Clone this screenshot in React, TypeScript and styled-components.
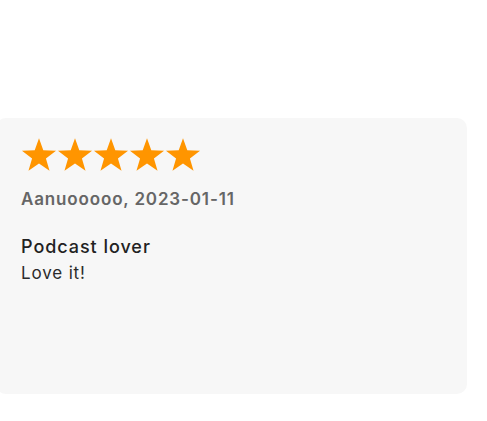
import React from "react";
import styled, { createGlobalStyle } from "styled-components";

const Global = createGlobalStyle`
  html, body { margin: 0; padding: 0; background: #ffffff; }
  body { font-family: Inter, "Noto Sans", sans-serif; -webkit-font-smoothing: antialiased; }
`;

const Page = styled.div`
  padding-top: 118px;
  padding-right: 20px;
  margin-left: -4px;
`;

const Card = styled.article`
  background: #f7f7f7;
  border-radius: 10px;
  height: 276px;
  box-sizing: border-box;
  padding: 19px 25px 0 25px;
  display: flex;
  flex-direction: column;
`;

const Stars = styled.div`
  display: flex;
  height: 36px;
`;

const StarBox = styled.svg`
  width: 36px;
  height: 36px;
  display: block;
`;

const Author = styled.div`
  margin-top: 15px;
  font-size: 17px;
  font-weight: 600;
  color: #666666;
  line-height: 22px;
  letter-spacing: 0.85px;
`;

const Title = styled.div`
  margin-top: 24px;
  font-size: 18px;
  font-weight: 500;
  color: #222222;
  line-height: 26px;
  letter-spacing: 0.95px;
`;

const Body = styled.div`
  font-size: 17px;
  font-weight: 400;
  color: #2b2b2b;
  line-height: 26px;
  letter-spacing: 0.85px;
`;

function starPoints(cx: number, cy: number, R: number, r: number) {
  const pts: string[] = [];
  for (let i = 0; i < 10; i++) {
    const rad = i % 2 === 0 ? R : r;
    const a = -Math.PI / 2 + (i * Math.PI) / 5;
    pts.push(`${(cx + rad * Math.cos(a)).toFixed(2)},${(cy + rad * Math.sin(a)).toFixed(2)}`);
  }
  return pts.join(" ");
}

const Star = () => (
  <StarBox viewBox="0 0 36 36">
    <polygon points={starPoints(18, 19.2, 17.9, 7.3)} fill="#ff9500" />
  </StarBox>
);

export default function App() {
  return (
    <>
      <Global />
      <Page>
        <Card>
          <Stars>
            {[0, 1, 2, 3, 4].map((i) => (
              <Star key={i} />
            ))}
          </Stars>
          <Author>Aanuooooo, 2023-01-11</Author>
          <Title>Podcast lover</Title>
          <Body>Love it!</Body>
        </Card>
      </Page>
    </>
  );
}
